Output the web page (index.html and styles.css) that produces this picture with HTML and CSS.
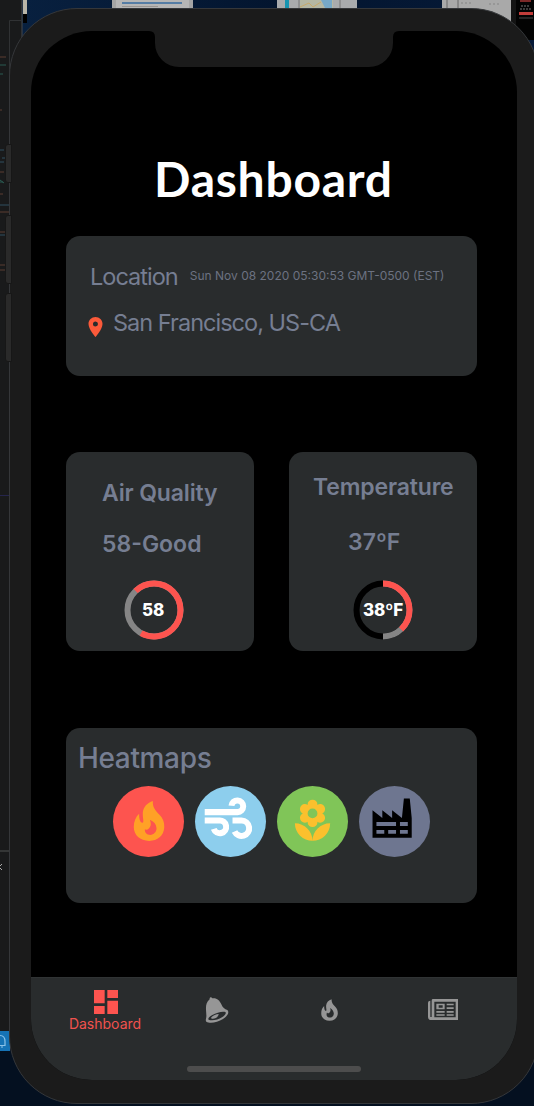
FILE: index.html
```html
<!DOCTYPE html>
<html lang="en">
<head>
<meta charset="utf-8">
<title>Dashboard</title>
<link rel="stylesheet" href="styles.css">
</head>
<body>
<svg class="desktop" viewBox="0 0 534 1106" aria-hidden="true">
  <defs>
    <linearGradient id="sea" x1="0" y1="0" x2="1" y2="0"><stop offset="0" stop-color="#08203f"/><stop offset=".5" stop-color="#03152f"/><stop offset="1" stop-color="#061a38"/></linearGradient>
  </defs>
  <rect width="534" height="1106" fill="#041020"/>
  <rect x="22" width="512" height="90" fill="url(#sea)"/>
  <rect width="22" height="1031" fill="#191a1b"/>
  <rect x="21.500" width="1" height="50" fill="#46494c"/>
  <rect x="23" width="4" height="14" fill="#b9b5a8"/><rect x="23" y="14" width="4" height="9" fill="#000"/>
  <path d="M9.500 1031V20.500H22" fill="none" stroke="#303234"/>
  <g>
    <rect x="112" width="81" height="10" fill="#a5a5a5"/><rect x="116" width="73" height="10" fill="#b6b6b6"/>
    <rect x="122" y="2" width="60" height="2" fill="#557da5"/><rect x="122" y="6" width="36" height="1" fill="#989593"/>
    <rect x="277" width="80" height="10" fill="#a9abad"/><rect x="285" width="4" height="10" fill="#1794b0"/>
    <rect x="300" width="33" height="10" fill="#b5b7a3"/><path d="M321 0h11v10h-6z" fill="#77a8c7"/><path d="M300 7l9-4 4 4 8-5" fill="none" stroke="#c7a96a"/>
    <path d="M299 0v10M340 0v10" stroke="#777"/>
    <rect x="442" width="69" height="26" fill="#a9a9a9"/><path d="M447 0v10M458 0v10" stroke="#666"/>
    <path d="M461 3h12M489 4h10" stroke="#858585" stroke-dasharray="2 2"/>
    <rect x="511" width="5" height="32" fill="#141414"/><rect x="516" width="18" height="40" fill="#030303"/>
    <rect x="520" y="0" width="11" height="2" fill="#7c2928"/><rect x="519" y="12" width="14" height="3" fill="#c13d3a"/><rect x="519" y="17" width="14" height="2" fill="#252525"/>
    <path d="M521 6h9M520 9h12" stroke="#777" stroke-dasharray="2 1"/>
  </g>
  <g fill="none" stroke-width="1" opacity=".65">
    <path d="M0 57h6M0 110h2M0 194h3" stroke="#80513f"/>
    <path d="M0 65h6M0 74h3M0 182h3" stroke="#347f71"/>
    <path d="M0 150h4M2 158h3M0 162h4M0 205h9M0 235h5" stroke="#3c6a86"/>
    <path d="M0 172h4M0 212h9M0 232h5M0 265h5M0 270h5" stroke="#80513f"/>
    <path d="M0 180l4 3" stroke="#347f71"/>
  </g>
  <path d="M0 495.500h10" stroke="#25254c"/>
  <path d="M0 851h10" stroke="#505253"/>
  <path d="M2 864l-3 3 3 3" fill="none" stroke="#aaa"/>
  <rect y="1031" width="10" height="20" fill="#1673b5"/>
  <path d="M0 1035.500q5 0 5 6v4h-6M1 1047h2" fill="none" stroke="#8cc3e8" stroke-width="1.200"/>
</svg>

<div class="phone">
  <i class="key key-mute"></i><i class="key key-up"></i><i class="key key-down"></i>
  <div class="screen">
    <svg class="notch" viewBox="0 0 250 37" aria-hidden="true"><path d="M0 0H250Q244 0 244 6V12A24 24 0 0 1 220 36H30A24 24 0 0 1 6 12V6Q6 0 0 0Z"/></svg>

    <main class="content">
      <h1 class="title">Dashboard</h1>

      <section class="card location">
        <div class="location-head">
          <span class="label">Location</span>
          <span class="date">Sun Nov 08 2020 05:30:53 GMT-0500 (EST)</span>
        </div>
        <div class="place">
          <svg class="pin" viewBox="5 2 14 20"><path d="M12 2C8.130 2 5 5.130 5 9c0 5.250 7 13 7 13s7-7.750 7-13c0-3.870-3.130-7-7-7zm0 9.500a2.500 2.500 0 1 1 0-5 2.500 2.500 0 0 1 0 5z"/></svg>
          <span class="city">San Francisco, US-CA</span>
        </div>
      </section>

      <div class="stats">
        <section class="card stat air">
          <h2 class="stat-name">Air Quality</h2>
          <p class="stat-value">58-Good</p>
          <div class="gauge">
            <svg class="ring" viewBox="0 0 60 60">
              <circle class="track" cx="30" cy="30" r="26.500"/>
              <circle class="arc" cx="30" cy="30" r="26.500" pathLength="360" stroke-dasharray="253 107" transform="rotate(-134 30 30)"/>
            </svg>
            <b class="gauge-text">58</b>
          </div>
        </section>
        <section class="card stat temp">
          <h2 class="stat-name">Temperature</h2>
          <p class="stat-value">37ºF</p>
          <div class="gauge">
            <svg class="ring" viewBox="0 0 60 60">
              <circle class="empty" cx="30" cy="30" r="26.500"/>
              <circle class="track" cx="30" cy="30" r="26.500" pathLength="360" stroke-dasharray="180 180" transform="rotate(-90 30 30)"/>
              <circle class="arc" cx="30" cy="30" r="26.500" pathLength="360" stroke-dasharray="136.800 223.200" transform="rotate(-90 30 30)"/>
            </svg>
            <b class="gauge-text">38ºF</b>
          </div>
        </section>
      </div>

      <section class="card heatmaps">
        <h2 class="heat-title">Heatmaps</h2>
        <div class="heat-row">
          <svg class="heat fire" viewBox="0 0 212 212"><path fill-rule="evenodd" d="M119 45C118 64 126 73 138 85C150 97 154 110 153 125C151 149 133 164 108 164C81 164 62 147 62 122C62 106 68 92 78 83C78 99 81 110 88 110C94 109 88 96 89 80C90 63 103 50 119 45ZM110 101C115 114 113 121 107 127C103 132 98 130 95 130C95 141 102 146 111 146C122 145 130 137 130 126C129 114 122 106 110 101Z"/></svg>
          <svg class="heat wind" viewBox="0 0 212 212"><path d="M29 78H127A17.500 17.500 0 1 0 109 59M29 103H72A19 19 0 1 1 56 128M112 103H139A23 23 0 1 1 118 136"/></svg>
          <svg class="heat flower" viewBox="0 0 71 71"><path transform="translate(12 11.700) scale(1.960)" d="M3 13A9 9 0 0 0 12 22C12 17 7.970 13 3 13M12 5.500A2.500 2.500 0 0 1 14.500 8A2.500 2.500 0 0 1 12 10.500A2.500 2.500 0 0 1 9.500 8A2.500 2.500 0 0 1 12 5.500M5.600 10.250A2.500 2.500 0 0 0 8.100 12.750C8.630 12.750 9.120 12.580 9.500 12.310V12.500A2.500 2.500 0 0 0 12 15A2.500 2.500 0 0 0 14.500 12.500V12.310C14.880 12.580 15.370 12.750 15.900 12.750C17.280 12.750 18.400 11.630 18.400 10.250C18.400 9.250 17.810 8.400 16.970 8C17.810 7.600 18.400 6.740 18.400 5.750C18.400 4.370 17.280 3.250 15.900 3.250C15.370 3.250 14.880 3.410 14.500 3.690V3.500A2.500 2.500 0 0 0 12 1A2.500 2.500 0 0 0 9.500 3.500V3.690C9.120 3.410 8.630 3.250 8.100 3.250A2.500 2.500 0 0 0 5.600 5.750C5.600 6.740 6.190 7.600 7.030 8C6.190 8.400 5.600 9.250 5.600 10.250M12 22A9 9 0 0 0 21 13C16 13 12 17 12 22Z"/></svg>
          <svg class="heat factory" viewBox="0 0 71 71"><path transform="translate(9.600 8.600) scale(1.960)" d="M4 18V20H8V18H4M4 14V16H14V14H4M10 18V20H14V18H10M16 14V16H20V14H16M16 18V20H20V18H16M2 22V8L7 12V8L12 12V8L17 12L18 2H21L22 12V22H2Z"/></svg>
        </div>
      </section>
    </main>

    <nav class="tabs">
      <a class="tab active">
        <svg class="i-dash" viewBox="3 3 18 18"><path d="M13 3V9H21V3M13 21H21V11H13M3 21H11V15H3M3 13H11V3H3V13Z"/></svg>
        <span class="tab-label">Dashboard</span>
      </a>
      <a class="tab"><svg class="i-bell" viewBox="466 81 72 78"><path fill-rule="evenodd" d="M480 88C479 81 485 80 488 85C501 83 510 91 515 103C519 113 525 118 533 120C540 127 534 138 520 147C503 158 480 161 470 155C466 150 471 145 470 135C470 122 464 101 480 88ZM477 149C486 153 505 150 517 142C526 136 531 129 527 126C519 123 501 127 488 135C478 141 474 146 477 149Z"/><path d="M484 143C491 136 499 132 507 132C506 141 496 148 486 146Z"/></svg></a>
      <a class="tab"><svg class="i-fire" viewBox="61 44 93 121"><path fill-rule="evenodd" d="M119 45C118 64 126 73 138 85C150 97 154 110 153 125C151 149 133 164 108 164C81 164 62 147 62 122C62 106 68 92 78 83C78 99 81 110 88 110C94 109 88 96 89 80C90 63 103 50 119 45ZM111 93C116 108 112 116 105 121C100 125 94 121 94 117C87 134 94 145 108 146C123 146 132 136 131 123C130 109 122 99 111 93Z"/></svg></a>
      <a class="tab"><svg class="i-news" viewBox="384 85 90 63"><path fill-rule="evenodd" d="M398 85H474V148H394Q384 148 384 138V96Q384 90 391 90V139H395V90Q395 85 398 85ZM403 93V140H467V93Z"/><path fill-rule="evenodd" d="M409 101H434V118H409ZM416 106V113H428V106ZM440 101H461V106H440ZM440 112H461V117H440ZM409 123H434V128H409ZM440 123H461V128H440ZM409 133H434V137H409ZM440 133H461V137H440Z" transform="translate(0 -2)"/></svg></a>
      <i class="home-bar"></i>
    </nav>
  </div>
</div>
</body>
</html>
```
FILE: styles.css
```css
* { box-sizing: border-box; }
body {
  position: relative;
  width: 534px;
  height: 1106px;
  margin: 0;
  overflow: hidden;
  background: #041020;
  font-family: Inter, "Liberation Sans", sans-serif;
}
h1, h2, p { margin: 0; }
svg { display: block; flex: none; }

.desktop { position: absolute; inset: 0; width: 534px; height: 1106px; }

.phone {
  position: relative;
  width: 530px;
  height: 1096px;
  margin: 8px 0 0 9px;
  padding: 22px 21px 23px 21px;
  border: 1px solid #35373a;
  border-radius: 68px;
  background: #1b1b1b;
}
.key {
  position: absolute;
  left: -5px;
  width: 7px;
  border: 1px solid #171717;
  border-radius: 3px 0 0 3px;
  background: #2a2a2a;
}
.key-mute { top: 135px; height: 39px; }
.key-up { top: 206px; height: 69px; }
.key-down { top: 284px; height: 69px; }

.screen {
  position: relative;
  display: flex;
  flex-direction: column;
  width: 486px;
  height: 1049px;
  overflow: hidden;
  border-radius: 61px;
  background: #000;
}
.notch { position: absolute; left: 118px; top: 0; width: 250px; height: 37px; fill: #1b1b1b; }

.content { flex: 1; padding: 118px 40px 0 35px; }
.title {
  height: 60px;
  padding-left: 88px;
  color: #fff;
  font: 700 48px/59px Lato, sans-serif;
  letter-spacing: 0.750px;
  white-space: nowrap;
}
.card { border-radius: 14px; background: #292c2d; color: #767e92; white-space: nowrap; }

.location { height: 140px; margin: 27px 0 0; padding: 27px 22px 0; }
.location-head { display: flex; height: 28px; padding-left: 2px; }
.label, .city { font-size: 23.500px; line-height: 28px; letter-spacing: -0.980px; }
.date { margin: -1px 0 0 12px; color: #6c7281; font-size: 12px; line-height: 28px; }
.place { display: flex; margin-top: 18px; }
.pin { width: 15px; height: 20px; margin-top: 8px; fill: #fb5a3a; }
.city { margin-left: 10px; }

.stats { display: flex; justify-content: space-between; margin-top: 76px; }
.stat { position: relative; width: 188px; height: 199px; font-weight: 600; }
.stat-name, .stat-value { font-size: 23px; font-weight: 600; line-height: 28px; }
.stat-name { letter-spacing: -0.150px; }
.air { padding: 27px 0 0 36px; }
.temp { padding: 21px 0 0 24px; }
.air .stat-value { margin-top: 23px; }
.temp .stat-value { margin: 27px 0 0 35px; }
.gauge { display: grid; width: 60px; height: 60px; place-items: center; }
.air .gauge { margin: 22px 0 0 22px; }
.temp .gauge { margin: 24px 0 0 40px; }
.ring, .gauge-text { grid-area: 1 / 1; }
.ring { width: 60px; height: 60px; fill: none; stroke-width: 6; }
.track { stroke: #858585; }
.empty { stroke: #000; }
.arc { stroke: #fd544f; }
.gauge-text { color: #fff; font-size: 17px; font-weight: 800; line-height: 20px; letter-spacing: -0.200px; }
.air .gauge-text { margin-right: 2px; }

.heatmaps { height: 175px; margin-top: 77px; padding: 12px 0 0 12px; }
.heat-title { font-size: 28px; font-weight: 500; line-height: 36px; letter-spacing: -0.350px; }
.heat-row { display: flex; gap: 11px; margin: 10px 0 0 35px; }
.heat { width: 71px; height: 71px; border-radius: 50%; }
.fire { background: #fd544f; fill: #ffa126; }
.wind { background: #8dceed; fill: none; stroke: #fff; stroke-width: 18; }
.flower { background: #80c558; fill: #fbc02d; }
.factory { background: #6e7690; fill: #000; }

.tabs {
  position: relative;
  display: grid;
  grid-template-columns: 148px 75px 151px 75px;
  height: 103px;
  border-top: 1px solid #303334;
  background: #292c2d;
  fill: #969696;
}
.tab { display: flex; flex-direction: column; align-items: center; padding-top: 19px; }
.active { padding-top: 12px; color: #f0524e; fill: #fd544f; }
.i-dash { width: 24px; height: 24px; margin-left: 1px; }
.tab-label { margin-top: 1px; font-size: 14px; line-height: 18px; }
.i-bell { width: 24px; height: 26px; }
.i-fire { width: 17px; height: 22px; margin-top: 2px; }
.i-news { width: 30px; height: 21px; margin-top: 2px; }
.home-bar { position: absolute; left: 156px; bottom: 8px; width: 174px; height: 6px; border-radius: 3px; background: #4d4d4d; }
```
